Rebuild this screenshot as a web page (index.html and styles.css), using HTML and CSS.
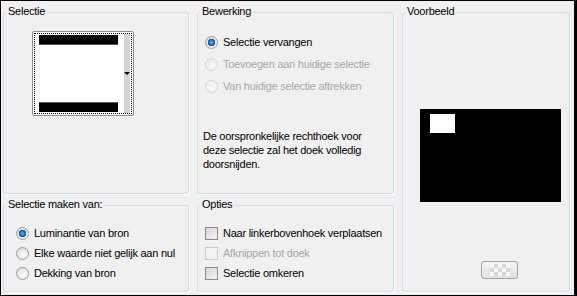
FILE: index.html
```html
<!DOCTYPE html>
<html lang="nl">
<head>
  <meta charset="UTF-8">
  <title>Selectie uit masker</title>
  <link rel="stylesheet" href="styles.css">
</head>
<body>

  <div class="dialog">

    <div class="group g-sel">
      <span class="group-title">Selectie</span>
      <div class="swatch">
        <div class="swatch-inner">
          <div class="swatch-img">
            <div class="bar bar-top"></div>
            <div class="bar bar-bottom"></div>
          </div>
          <div class="swatch-scroll"><span class="arrow"></span></div>
        </div>
      </div>
    </div>

    <div class="group g-edit">
      <span class="group-title">Bewerking</span>
      <div class="options">
        <div class="opt"><span class="radio checked"></span>Selectie vervangen</div>
        <div class="opt disabled"><span class="radio"></span>Toevoegen aan huidige selectie</div>
        <div class="opt disabled"><span class="radio"></span>Van huidige selectie aftrekken</div>
      </div>
      <p class="note">De oorspronkelijke rechthoek voor deze selectie zal het doek volledig doorsnijden.</p>
    </div>

    <div class="group g-preview">
      <span class="group-title">Voorbeeld</span>
      <div class="canvas">
        <div class="canvas-sel"></div>
      </div>
      <div class="pv-btn"><span class="checker"></span></div>
    </div>

    <div class="group g-source">
      <span class="group-title">Selectie maken van:</span>
      <div class="options rows">
        <div class="opt"><span class="radio checked"></span>Luminantie van bron</div>
        <div class="opt"><span class="radio"></span>Elke waarde niet gelijk aan nul</div>
        <div class="opt"><span class="radio"></span>Dekking van bron</div>
      </div>
    </div>

    <div class="group g-opts">
      <span class="group-title">Opties</span>
      <div class="options rows">
        <div class="opt"><span class="check"></span>Naar linkerbovenhoek verplaatsen</div>
        <div class="opt disabled"><span class="check"></span>Afknippen tot doek</div>
        <div class="opt"><span class="check"></span>Selectie omkeren</div>
      </div>
    </div>

  </div>

</body>
</html>
```

FILE: styles.css
```css
body {
  margin: 0;
  background: #000;
  font-family: 'Liberation Sans', Arial, sans-serif;
  font-size: 11px;
  letter-spacing: -0.25px;
  color: #000;
}
.dialog {
  margin: 1px 0 0 1px;
  width: 573px;
  height: 294px;
  box-sizing: border-box;
  padding: 11px 0 2px 2px;
  background: #f0f0f0;
  display: grid;
  grid-template-columns: 186px 197px 168px;
  grid-template-rows: 182px 87px;
  column-gap: 8px;
  row-gap: 11px;
}
.group {
  position: relative;
  border: 1px solid #d3dde4;
  border-radius: 3px;
  box-shadow: 1px 1px 0 #fff;
}
.group-title {
  position: absolute;
  top: -8px;
  left: 2px;
  padding: 0 2px;
  line-height: 13px;
  background: #f0f0f0;
  white-space: nowrap;
}
.g-preview {
  grid-column: 3;
  grid-row: 1 / span 2;
}
.g-source { grid-column: 1; grid-row: 2; }
.g-opts { grid-column: 2; grid-row: 2; }

/* selectie staal */
.swatch {
  margin: 18px 0 0 28px;
  width: 102px;
  height: 85px;
  box-sizing: border-box;
  border: 1px solid #8e8e8e;
  border-radius: 2px;
  padding: 1px;
  background: #fff;
}
.swatch-inner {
  height: 100%;
  box-sizing: border-box;
  border: 1px dotted #000;
  display: flex;
}
.swatch-img {
  width: 89px;
  display: flex;
  flex-direction: column;
  justify-content: space-between;
  padding: 1px 0;
}
.bar {
  margin-left: 4px;
  width: 79px;
  height: 9px;
  background: #000;
}
.bar-top { border-bottom: 1px solid #555; }
.bar-bottom { border-top: 1px solid #555; }
.swatch-scroll {
  width: 6px;
  background: #d4d4d4;
  display: flex;
  align-items: center;
  justify-content: center;
}
.arrow {
  width: 0;
  height: 0;
  border-left: 3px solid transparent;
  border-right: 3px solid transparent;
  border-top: 3px solid #000;
}

/* keuzes */
.options {
  padding-left: 7px;
  margin-top: 18px;
}
.opt {
  display: flex;
  align-items: center;
  height: 22px;
  white-space: nowrap;
}
.rows { margin-top: 17px; }
.rows .opt { height: 20px; }
.g-source .options { padding-left: 12px; }
.opt.disabled { color: #a8a8a8; }
.radio {
  width: 11px;
  height: 11px;
  margin-right: 5px;
  border: 1px solid #9c9c9c;
  border-radius: 50%;
  background: radial-gradient(circle at 60% 65%, #fff 0, #ececec 45%, #d0d0d0 100%);
  flex: none;
}
.radio.checked {
  background:
    radial-gradient(circle at 50% 50%, #5cb5f2 0, #1a6fc4 2.5px, #15508f 3.5px, transparent 4px),
    radial-gradient(circle at 60% 65%, #fff 0, #ececec 45%, #d0d0d0 100%);
}
.disabled .radio {
  border-color: #d6d6d6;
  background: radial-gradient(circle at 60% 65%, #f6f6f6 0, #ebebeb 100%);
}
.check {
  width: 11px;
  height: 11px;
  margin-right: 5px;
  border: 1px solid #8a8a8a;
  background: linear-gradient(135deg, #d6d6d6, #f4f4f4);
  flex: none;
}
.disabled .check {
  border-color: #cbcbcb;
  background: #f2f2f2;
}
.note {
  margin: 32px 0 0 5px;
  max-width: 176px;
  line-height: 14px;
}

/* voorbeeld */
.canvas {
  margin: 96px 0 0 17px;
  width: 141px;
  height: 93px;
  box-sizing: border-box;
  padding: 5px 0 0 10px;
  background: #000;
}
.canvas-sel {
  width: 25px;
  height: 19px;
  background: #fff;
}
.pv-btn {
  margin: 59px 0 0 78px;
  width: 37px;
  height: 18px;
  box-sizing: border-box;
  border: 1px solid #a4a4a4;
  border-radius: 3px;
  background: linear-gradient(#f4f4f4, #e2e2e2);
  display: flex;
  align-items: center;
  justify-content: center;
}
.checker {
  width: 20px;
  height: 12px;
  background: repeating-conic-gradient(#d2d2d2 0 25%, #fafafa 0 50%) 0 0 / 8px 8px;
  opacity: 0.8;
}
```
